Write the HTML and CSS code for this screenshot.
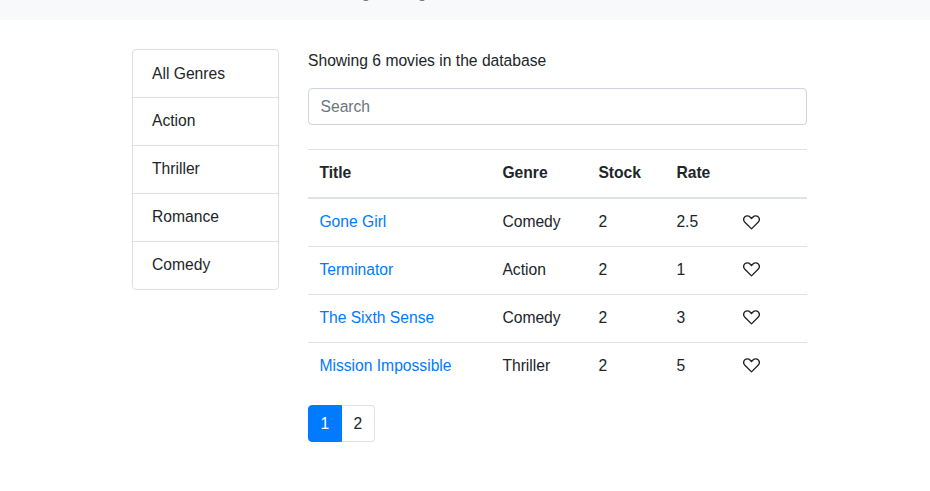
FILE: index.html
```html
<!DOCTYPE html>
<html lang="en">
<head>
<meta charset="utf-8">
<title>Movies</title>
<link rel="stylesheet" href="styles.css">
</head>
<body>
<svg class="defs" width="0" height="0"><symbol id="heart" viewBox="0 0 16 14"><path d="M8 13 1.8 6.8C.4 5.2.4 3 1.7 1.7 3.1.4 5.3.5 6.6 1.8L8 3.2l1.4-1.4C10.7.5 12.9.4 14.3 1.7c1.3 1.3 1.3 3.5-.1 5.1Z" fill="none" stroke="currentColor" stroke-width="1.3" stroke-linejoin="round"/></symbol></svg>
<nav class="navbar"><a>Login</a><a>Register</a></nav>
<main class="layout">
  <ul class="genres"><li>All Genres</li><li>Action</li><li>Thriller</li><li>Romance</li><li>Comedy</li></ul>
  <section class="content">
    <p class="summary">Showing 6 movies in the database</p>
    <input class="search" type="text" placeholder="Search">
    <table class="movies">
      <colgroup><col class="c-title"><col class="c-genre"><col class="c-stock"><col class="c-rate"><col></colgroup>
      <thead><tr><th>Title</th><th>Genre</th><th>Stock</th><th>Rate</th><th></th></tr></thead>
      <tbody>
        <tr><td><a>Gone Girl</a></td><td>Comedy</td><td>2</td><td>2.5</td><td><svg class="heart"><use href="#heart"/></svg></td></tr>
        <tr><td><a>Terminator</a></td><td>Action</td><td>2</td><td>1</td><td><svg class="heart"><use href="#heart"/></svg></td></tr>
        <tr><td><a>The Sixth Sense</a></td><td>Comedy</td><td>2</td><td>3</td><td><svg class="heart"><use href="#heart"/></svg></td></tr>
        <tr><td><a>Mission Impossible</a></td><td>Thriller</td><td>2</td><td>5</td><td><svg class="heart"><use href="#heart"/></svg></td></tr>
      </tbody>
    </table>
    <div class="pagination"><a class="page active">1</a><a class="page">2</a></div>
  </section>
</main>
</body>
</html>
```
FILE: styles.css
```css
* { box-sizing: border-box; }
body {
  margin: 0;
  overflow: hidden;
  background: #fff;
  color: #212529;
  font: 15.65px/24px "Liberation Sans", Arial, sans-serif;
}
.defs { display: block; }
.navbar {
  display: flex;
  gap: 15.6px;
  height: 20px;
  margin-bottom: 29px;
  padding-left: 344px;
  background: #f8f9fa;
  color: rgba(0, 0, 0, .5);
  overflow: hidden;
}
.navbar a { margin-top: -19px; }
.layout { display: flex; gap: 29px; padding-left: 132px; align-items: flex-start; }
.genres {
  width: 147px;
  margin: 0;
  padding: 0;
  list-style: none;
  border: 1px solid #dfdfdf;
  border-radius: 4px;
}
.genres li { height: 48px; padding: 11px 19px; }
.genres li + li { border-top: 1px solid #dfdfdf; }
.genres li:first-child { height: 47px; padding-top: 12px; }
.content { width: 499px; }
.summary { margin: 0 0 15px; }
.search {
  display: block;
  width: 100%;
  height: 37px;
  margin-bottom: 24px;
  padding: 0 11.5px;
  border: 1px solid #ced4da;
  border-radius: 4px;
  font: inherit;
}
.search::placeholder { color: #6c757d; opacity: 1; }
.movies { width: 100%; table-layout: fixed; border-spacing: 0; }
.c-title { width: 183px; }
.c-genre { width: 96px; }
.c-stock { width: 78px; }
.c-rate { width: 67px; }
.movies th, .movies td { height: 48px; padding: 0 11px 1px 11.4px; text-align: left; vertical-align: middle; }
.movies th { height: 50px; padding-bottom: 2px; border-top: 1px solid #dee2e6; border-bottom: 2px solid #dee2e6; }
.movies tr + tr td { border-top: 1px solid #dee2e6; padding-bottom: 2px; }
.movies tr:first-child td { height: 47px; }
.movies a { color: #007bff; }
.heart { display: block; width: 17px; height: 15px; color: #212529; }
.pagination { display: flex; margin-top: 15px; }
.page {
  width: 33.5px;
  height: 37px;
  line-height: 35px;
  text-align: center;
  border: 1px solid #dee2e6;
  border-left: 0;
  border-radius: 0 4px 4px 0;
}
.page.active { background: #007bff; border: 1px solid #007bff; border-radius: 4px 0 0 4px; color: #fff; }
```
